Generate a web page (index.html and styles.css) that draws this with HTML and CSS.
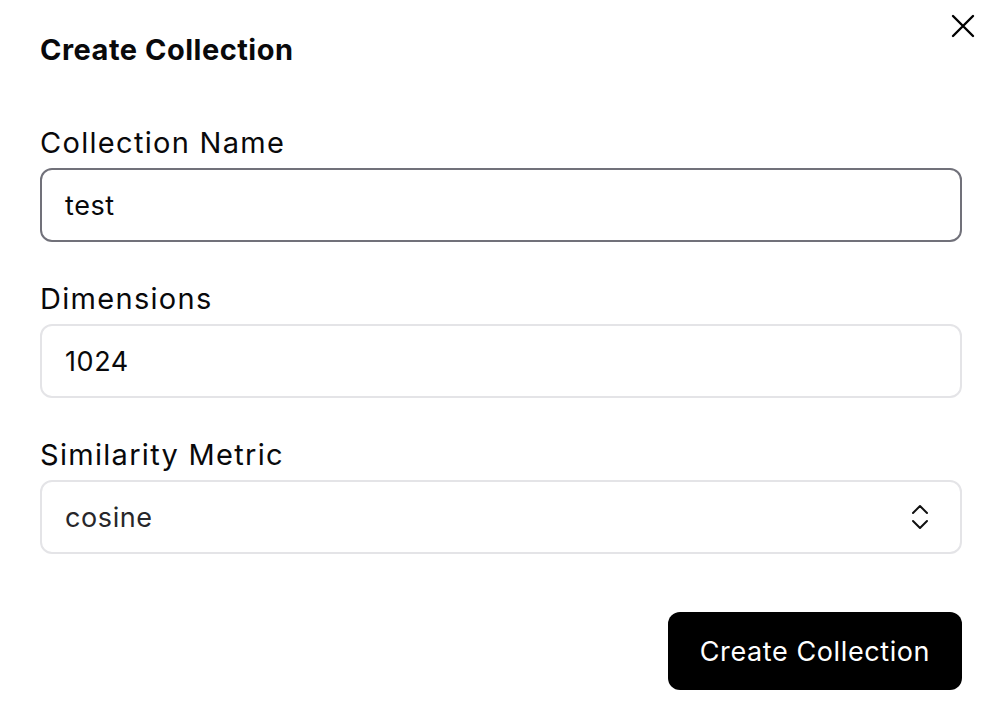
FILE: index.html
```html
<!DOCTYPE html>
<html lang="en">
<head>
<meta charset="utf-8">
<title>Create Collection</title>
<link rel="stylesheet" href="styles.css">
</head>
<body>
<div class="dialog">
  <button class="close" aria-label="Close">
    <svg width="24" height="24" viewBox="0 0 24 24" fill="none" stroke="#000" stroke-width="2.4" stroke-linecap="round"><path d="M2 2L22 22M22 2L2 22"/></svg>
  </button>
  <h2 class="title">Create Collection</h2>
  <form class="form">
    <div class="field">
      <label class="label">Collection Name</label>
      <div class="input focused">test</div>
    </div>
    <div class="field">
      <label class="label">Dimensions</label>
      <div class="input">1024</div>
    </div>
    <div class="field">
      <label class="label">Similarity Metric</label>
      <div class="input select">
        <span class="select-value">cosine</span>
        <svg class="chev" width="18" height="26" viewBox="0 0 18 26" fill="none" stroke="#111" stroke-width="2" stroke-linecap="round" stroke-linejoin="round"><path d="M2 9L9 2L16 9"/><path d="M2 17L9 24L16 17"/></svg>
      </div>
    </div>
    <div class="actions">
      <button type="button" class="btn">Create Collection</button>
    </div>
  </form>
</div>
</body>
</html>
```
FILE: styles.css
```css
* { box-sizing: border-box; }
html, body { margin: 0; padding: 0; background: #fff; }
body { font-family: Inter, "Noto Sans", sans-serif; color: #09090b; }
.dialog { position: relative; padding: 32px 32px 20px 40px; }
.close {
  position: absolute; top: 14px; right: 19px;
  background: none; border: 0; padding: 0; width: 24px; height: 24px; cursor: pointer;
}
.close svg { display: block; }
.title { margin: 0; font-size: 29px; line-height: 36px; font-weight: 700; letter-spacing: 0.5px; }
.form { display: flex; flex-direction: column; gap: 40px; margin-top: 58px; }
.field { display: flex; flex-direction: column; gap: 8px; }
.label { font-size: 29px; line-height: 34px; font-weight: 400; color: #09090b; letter-spacing: 1.3px; }
.input {
  height: 74px; border: 2px solid #e4e4e7; border-radius: 12px;
  padding: 0 23px; display: flex; align-items: center;
  font-size: 27px; color: #09090b; letter-spacing: 0.6px;
}
.input.focused { border-color: #71717a; }
.select { justify-content: space-between; padding-right: 31px; }
.select-value { color: #27272a; }
.actions { display: flex; justify-content: flex-end; margin-top: 18px; }
.btn {
  height: 78px; width: 294px; border: 0; border-radius: 12px; background: #000;
  color: #fff; font-family: inherit; font-size: 27px; font-weight: 400; cursor: pointer;
  letter-spacing: 0.6px;
}
```
